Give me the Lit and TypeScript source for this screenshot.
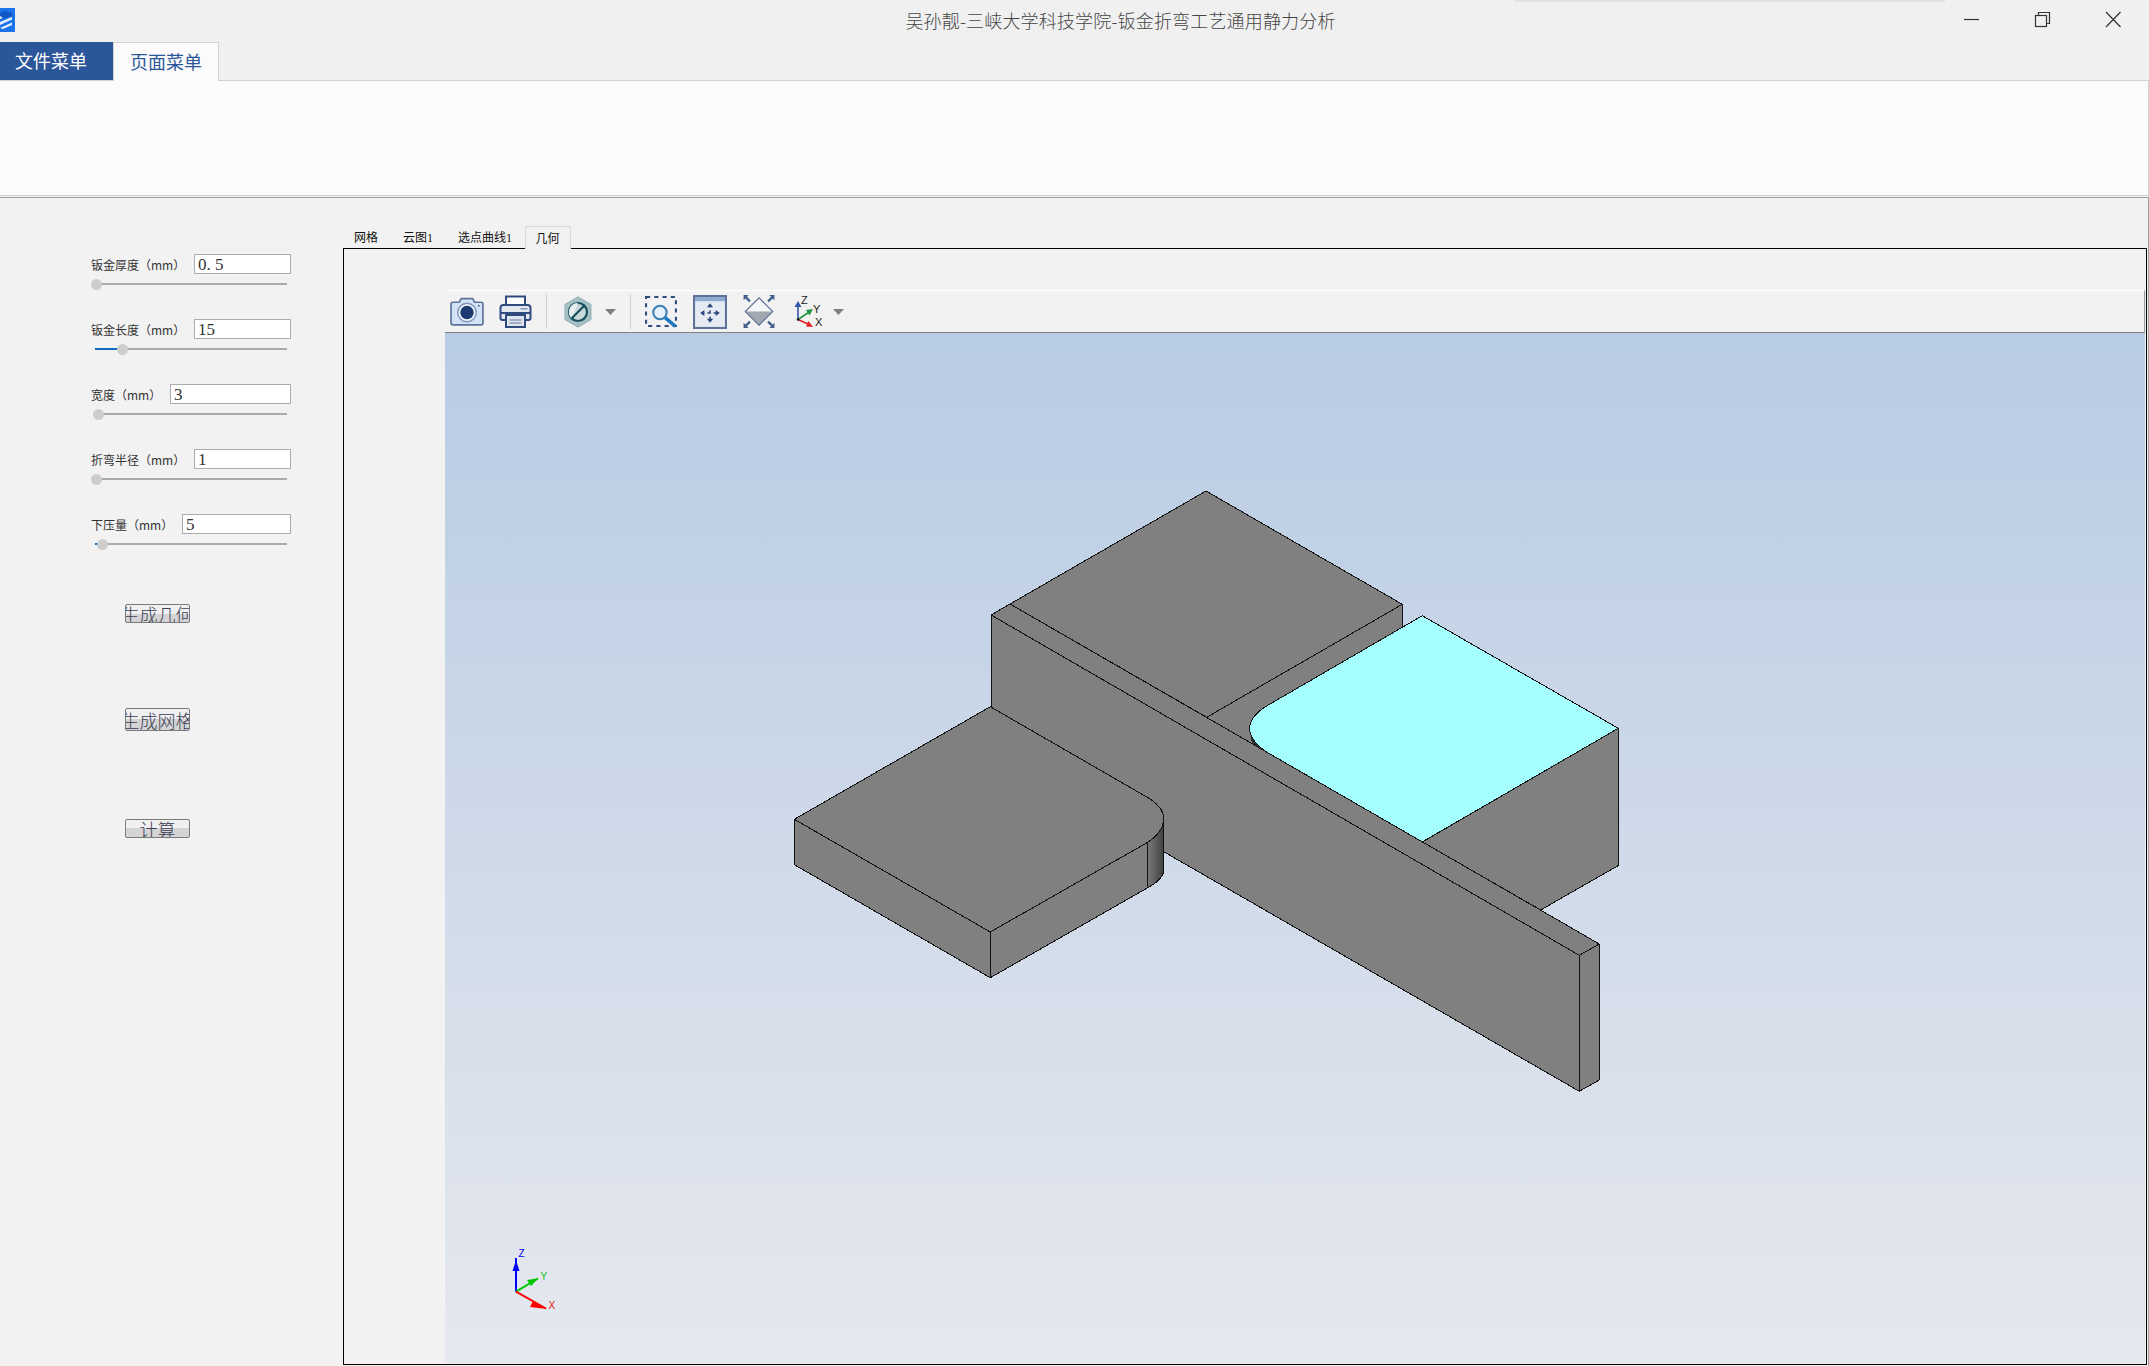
import { LitElement, html, css, svg } from 'lit';
import { customElement } from 'lit/decorators.js';

const FIELDS = [
  { label: '钣金厚度（mm）', value: '0. 5', thumb: 1, fill: 0, wide: false, mid: false },
  { label: '钣金长度（mm）', value: '15', thumb: 27, fill: 22, wide: false, mid: false },
  { label: '宽度（mm）', value: '3', thumb: 3, fill: 0, wide: true, mid: false },
  { label: '折弯半径（mm）', value: '1', thumb: 1, fill: 0, wide: false, mid: false },
  { label: '下压量（mm）', value: '5', thumb: 7, fill: 3, wide: false, mid: true },
];

const NAVY = '#2f4a7d';

@customElement('app-root')
export class AppRoot extends LitElement {
  static styles = css`
    :host {
      display: block;
      position: relative;
      width: 2149px;
      height: 1366px;
      overflow: hidden;
      background: #f0f0f0;
      font-family: 'Noto Sans CJK SC', 'Liberation Sans', sans-serif;
      color: #222;
    }

    /* title bar */
    .titlebar {
      display: flex;
      align-items: center;
      height: 42px;
    }
    .logo {
      width: 15px;
      height: 24px;
      flex: none;
      margin-bottom: 2px;
    }
    .title {
      flex: 1;
      padding: 0 0 2px 290px;
      text-align: center;
      font-size: 18px;
      font-weight: 300;
      letter-spacing: 0.17px;
      color: #444;
    }
    .controls {
      display: flex;
      flex: none;
    }
    .controls svg {
      width: 71px;
      height: 42px;
    }
    .shadow {
      position: absolute;
      left: 1515px;
      top: 0;
      width: 430px;
      height: 3px;
      background: linear-gradient(#dcdcdc, #f0f0f0);
    }

    /* ribbon */
    .ribbon-tabs {
      display: flex;
      height: 38px;
    }
    .rtab {
      box-sizing: border-box;
      height: 38px;
      font-size: 18px;
      line-height: 37px;
      text-align: center;
    }
    .rtab.file {
      width: 113px;
      padding-left: 15px;
      text-align: left;
      background: #2b579a;
      color: #fff;
    }
    .rtab.page {
      position: relative;
      z-index: 1;
      width: 106px;
      height: 39px;
      background: #fbfbfb;
      color: #2b579a;
      border: 1px solid #d2d2d2;
      border-bottom: none;
    }
    .ribbon-body {
      box-sizing: border-box;
      height: 116px;
      margin-bottom: 1px;
      background: #fbfbfb;
      border: 1px solid #d2d2d2;
      border-left: none;
    }

    /* main area */
    .main {
      box-sizing: border-box;
      display: grid;
      grid-template-columns: 343px 1fr;
      height: 1169px;
      background: #f2f2f2;
      border-top: 1px solid #a0a0a0;
      border-right: 1px solid #a0a0a0;
    }

    /* parameter panel */
    .panel {
      display: flex;
      flex-direction: column;
      padding: 56px 0 0 91px;
    }
    .field {
      width: 200px;
      height: 65px;
    }
    .row {
      display: flex;
      align-items: center;
      justify-content: space-between;
      height: 20px;
    }
    .row label {
      font-size: 12px;
      color: #333;
      white-space: nowrap;
    }
    .row input {
      box-sizing: border-box;
      width: 97px;
      height: 20px;
      padding: 1px 0 0 3px;
      border: 1px solid #ababab;
      border-radius: 0;
      outline: none;
      background: #fff;
      font-family: 'Liberation Serif', serif;
      font-size: 17px;
      color: #333;
      white-space: pre;
    }
    .row input.wide {
      width: 121px;
    }
    .row input.mid {
      width: 109px;
    }
    .slider {
      position: relative;
      width: 192px;
      height: 2px;
      margin: 9px 0 0 4px;
      background: #aaaaaa;
    }
    .fill {
      position: absolute;
      left: 0;
      top: 0;
      height: 2px;
      background: #0f6cbd;
    }
    .thumb {
      position: absolute;
      top: -4.5px;
      width: 11px;
      height: 11px;
      border-radius: 50%;
      background: #cdcdcd;
    }
    .btn {
      box-sizing: border-box;
      width: 65px;
      margin-left: 34px;
      padding: 0;
      overflow: hidden;
      display: flex;
      align-items: center;
      justify-content: center;
      border: 1px solid #7b7b7b;
      border-radius: 2px;
      background: linear-gradient(#f0f0f0 50%, #d4d4d4 50%);
      font-family: inherit;
      font-size: 18px;
      font-weight: 300;
      line-height: 1;
      color: #3c3f58;
      white-space: nowrap;
    }
    .btn.one {
      height: 19px;
      margin-top: 25px;
    }
    .btn.two {
      height: 23px;
      margin-top: 85px;
    }
    .btn.three {
      height: 19px;
      margin-top: 88px;
    }

    /* tab widget with the viewer */
    .work {
      display: flex;
      flex-direction: column;
      padding: 28px 1px 1px 0;
      min-height: 0;
    }
    .tabs {
      display: flex;
      height: 22px;
      flex: none;
      margin-left: -1.5px;
    }
    .tab {
      box-sizing: border-box;
      height: 22px;
      padding: 0 12.5px;
      font-family: 'Liberation Serif', 'Noto Sans CJK SC', serif;
      font-size: 12px;
      line-height: 25px;
      color: #111;
      white-space: nowrap;
    }
    .tab.active {
      position: relative;
      z-index: 1;
      height: 23px;
      padding: 0 10px;
      background: #f2f2f2;
      border: 1px solid #d9d9d9;
      border-bottom: none;
      line-height: 24px;
    }
    .frame {
      box-sizing: border-box;
      flex: 1;
      display: flex;
      flex-direction: column;
      min-height: 0;
      padding: 41px 1px 1px 101px;
      border: 1px solid #000;
    }
    .toolbar {
      box-sizing: border-box;
      display: flex;
      align-items: center;
      height: 43px;
      flex: none;
      background: #f2f2f2;
      border-top: 1px solid #fff;
      border-bottom: 1px solid #808080;
      border-right: 1px solid #9a9a9a;
    }
    .toolbar svg {
      flex: none;
    }
    .sep {
      width: 1px;
      height: 35px;
      margin-left: 14px;
      background: #cfcfcf;
    }
    .cam { margin-left: 5px; }
    .printer { margin-left: 15px; }
    .hex { margin-left: 17px; }
    .drop { margin-left: 13px; }
    .zoom { margin-left: 14px; }
    .pan { margin-left: 15px; }
    .fit { margin-left: 15px; }
    .axes { margin-left: 17px; }
    .drop2 { margin-left: 6px; }
    .scene {
      flex: 1;
      display: block;
      width: 100%;
      min-height: 0;
      background: linear-gradient(#b8cce4, #e6e8ee);
    }
  `;

  private renderPart() {
    // the sheet metal part, in page coordinates
    return svg`
      <defs>
        <linearGradient id="bend" x1="0" x2="1" y1="0" y2="0">
          <stop offset="0" stop-color="#7a7a7a" />
          <stop offset="1" stop-color="#404040" />
        </linearGradient>
      </defs>
      <g stroke="#111" stroke-width="1" stroke-linejoin="miter" shape-rendering="crispEdges">
        <polygon fill="#808080" stroke="none" points="1206.7,717.3 1402.3,604.3 1402.3,640 1268,720 1252,743" />
        <polygon fill="#808080" points="1010,604 1206,491 1402.3,604.3 1206.7,717.3" />
        <line x1="1402.3" y1="604.3" x2="1402.3" y2="627" />
        <polygon fill="#808080" points="1422.3,842 1618.3,728.3 1618.3,865.5 1540.7,910" />
        <polygon fill="#808080" points="991,615 1010,604 1599.3,944 1599.3,1080 1579.3,1091.3 1163.7,851.7 991,752" />
        <line x1="991" y1="615" x2="1579.3" y2="955.3" />
        <line x1="1579.3" y1="955.3" x2="1579.3" y2="1091.3" />
        <line x1="1579.3" y1="955.3" x2="1599.3" y2="944" />
        <path fill="#333" stroke="none" d="M1249.7 728.3 L1251.7 742.7 L1266.7 752 Z" />
        <path fill="#a6ffff" d="M1422.3 615.7 L1618.3 728.3 L1422.3 841.9 L1266.7 752.1 Q1249.7 741 1249.7 728.3 Q1249.7 716 1268.3 705 Z" />
        <polygon fill="#808080" points="794.3,819.3 990.3,932 990.3,977.7 794.3,864.7" />
        <polygon fill="#808080" points="990.3,932 1147.7,842.3 1147.7,887.7 990.3,977.7" />
        <path fill="url(#bend)" d="M1147.7 842.3 Q1163.7 832 1163.7 818.3 L1163.7 870 Q1163.7 879 1147.7 887.7 Z" />
        <path fill="#808080" d="M794.3 819.3 L990.3 706.7 L1143.3 795 Q1163.7 806 1163.7 818.3 Q1163.7 832 1147.7 842.3 L990.3 932 Z" />
      </g>
    `;
  }

  private renderTriad() {
    return svg`
      <g fill="none" stroke-width="2">
        <line x1="516" y1="1291.7" x2="516" y2="1258" stroke="#0000ff" />
        <line x1="516" y1="1291.7" x2="538" y2="1278.5" stroke="#00c800" />
        <line x1="516" y1="1291.7" x2="546" y2="1308.5" stroke="#ff0000" />
      </g>
      <polygon fill="#0000ff" points="516,1260 519.5,1271 512.5,1271" />
      <polygon fill="#00c800" points="538.3,1278.3 527,1280 531,1286" />
      <polygon fill="#ff0000" points="547,1309 533,1301 530,1307" />
      <g font-family="'Liberation Sans', sans-serif" font-size="10">
        <text x="518.5" y="1257" fill="#0000ff">Z</text>
        <text x="540.5" y="1280" fill="#20c020">Y</text>
        <text x="548.5" y="1309" fill="#e01010">X</text>
      </g>
    `;
  }

  render() {
    return html`
      <div class="titlebar">
        <svg class="logo" viewBox="0 0 15 24">
          <rect width="15" height="24" fill="#1a73e8" />
          <path d="M0 5 L4 3 L12 5 L12 8 L0 12 Z" fill="#0f57c4" />
          <path d="M0 8 L3 10 L0 11 Z M0 14 L12 9 L12 11.5 L0 17 Z M0 20 L12 14.5 L12 17 L3 21 Z" fill="#e8f1fd" />
        </svg>
        <div class="title">吴孙靓-三峡大学科技学院-钣金折弯工艺通用静力分析</div>
        <div class="controls">
          <svg viewBox="0 0 71 42">
            <line x1="28" y1="19.5" x2="43" y2="19.5" stroke="#333" stroke-width="1.2" />
          </svg>
          <svg viewBox="0 0 71 42">
            <g fill="none" stroke="#333" stroke-width="1.2">
              <rect x="28.5" y="15.5" width="11" height="11" />
              <path d="M31.5 15.5 V12.5 H42.5 V23.5 H39.5" />
            </g>
          </svg>
          <svg viewBox="0 0 71 42">
            <path d="M28 12 L42.5 27 M42.5 12 L28 27" fill="none" stroke="#333" stroke-width="1.2" />
          </svg>
        </div>
      </div>
      <div class="shadow"></div>

      <div class="ribbon-tabs">
        <div class="rtab file">文件菜单</div>
        <div class="rtab page">页面菜单</div>
      </div>
      <div class="ribbon-body"></div>

      <div class="main">
        <div class="panel">
          ${FIELDS.map(
            (f) => html`
              <div class="field">
                <div class="row">
                  <label>${f.label}</label>
                  <input class="${f.wide ? 'wide' : f.mid ? 'mid' : ''}" .value=${f.value} />
                </div>
                <div class="slider">
                  <div class="fill" style="width:${f.fill}px"></div>
                  <div class="thumb" style="left:${f.thumb - 5.5}px"></div>
                </div>
              </div>
            `
          )}
          <button class="btn one">生成几何</button>
          <button class="btn two">生成网格</button>
          <button class="btn three">计算</button>
        </div>

        <div class="work">
          <div class="tabs">
            <div class="tab">网格</div>
            <div class="tab">云图1</div>
            <div class="tab">选点曲线1</div>
            <div class="tab active">几何</div>
          </div>
          <div class="frame">
            <div class="toolbar">
              <svg class="cam" width="34" height="29" viewBox="0 0 33 28">
                <path d="M1 7 Q1 5 3 5 H9 L11 1.5 H22 L24 5 H30 Q32 5 32 7 V25 Q32 27 30 27 H3 Q1 27 1 25 Z" fill="#d3e2f6" stroke="#5d7298" stroke-width="1.6" />
                <circle cx="16.5" cy="15" r="9" fill="#eef4fc" stroke="#7f95b8" stroke-width="1.4" />
                <circle cx="16.5" cy="15" r="6.5" fill="#1e3a72" />
                <circle cx="28" cy="8.5" r="1" fill="#5d7298" />
              </svg>
              <svg class="printer" width="33" height="33" viewBox="0 0 32 33">
                <rect x="6.5" y="1.5" width="19" height="10" fill="#fff" stroke="${NAVY}" stroke-width="2" />
                <path d="M6 25 H3 Q1 25 1 23 V13 Q1 10 4 10 H28 Q31 10 31 13 V23 Q31 25 29 25 H26" fill="#e4e9f1" stroke="${NAVY}" stroke-width="2" />
                <rect x="1.5" y="17" width="29" height="2" fill="${NAVY}" />
                <rect x="21" y="13" width="7" height="1.6" fill="#8a9ab5" />
                <rect x="6.5" y="20" width="19" height="12" fill="#dfe5ee" stroke="${NAVY}" stroke-width="2" />
                <path d="M10 25 H22 M10 28 H22" stroke="#8a9ab5" stroke-width="1.4" />
              </svg>
              <div class="sep"></div>
              <svg class="hex" width="28" height="32" viewBox="0 0 28 32">
                <polygon points="14,0.8 27,8.4 27,23.6 14,31.2 1,23.6 1,8.4" fill="#a7c0c6" stroke="#93aeb5" />
                <circle cx="14" cy="16" r="9" fill="#c9d8da" stroke="#17505f" stroke-width="2.2" />
                <path d="M14 7 A9 9 0 0 0 7.6 22.4 Z" fill="#e7eeef" />
                <line x1="7.8" y1="22.2" x2="20.2" y2="9.8" stroke="#17505f" stroke-width="2.2" />
              </svg>
              <svg class="drop" width="11" height="6" viewBox="0 0 11 6">
                <polygon points="0,0 11,0 5.5,6" fill="#808080" />
              </svg>
              <div class="sep"></div>
              <svg class="zoom" width="33" height="32" viewBox="0 0 32 31">
                <rect x="1" y="1" width="29" height="28" fill="none" stroke="${NAVY}" stroke-width="2" stroke-dasharray="4 4" />
                <circle cx="14.5" cy="16" r="6.5" fill="#e6f0fa" stroke="#3a7fb5" stroke-width="2" />
                <line x1="19.5" y1="21" x2="29.5" y2="29.5" stroke="#1c78c0" stroke-width="3.4" />
              </svg>
              <svg class="pan" width="34" height="34" viewBox="0 0 33 33">
                <rect x="1" y="1" width="31" height="31" fill="#e6eaf2" stroke="#5d7298" stroke-width="2" />
                <rect x="2" y="2" width="29" height="4" fill="#8ea9d2" />
                <path d="M16.5 9 V26 M8 17.5 H25" stroke="${NAVY}" stroke-width="1.6" stroke-dasharray="3 3" fill="none" />
                <path d="M16.5 8 L13.5 12 H19.5 Z M16.5 27 L13.5 23 H19.5 Z M7 17.5 L11 14.5 V20.5 Z M26 17.5 L22 14.5 V20.5 Z" fill="${NAVY}" />
              </svg>
              <svg class="fit" width="34" height="35" viewBox="0 0 32 34">
                <polygon points="16,4 29,17 16,30 3,17" fill="#e9edf3" stroke="#5d7298" stroke-width="1.6" />
                <polygon points="16,4.5 28.5,17 3.5,17" fill="#f5f6f8" />
                <polygon points="16,17 28.5,17 16,29.5 3.5,17" fill="#a3a8b0" />
                <path d="M1 1 H6 L4.3 2.7 L8 6.4 L6.4 8 L2.7 4.3 L1 6 Z M31 1 H26 L27.7 2.7 L24 6.4 L25.6 8 L29.3 4.3 L31 6 Z M1 33 H6 L4.3 31.3 L8 27.6 L6.4 26 L2.7 29.7 L1 28 Z M31 33 H26 L27.7 31.3 L24 27.6 L25.6 26 L29.3 29.7 L31 28 Z" fill="#43608f" />
              </svg>
              <svg class="axes" width="34" height="33" viewBox="0 0 34 33">
                <line x1="5" y1="24.5" x2="5" y2="9" stroke="#2d56a8" stroke-width="1.6" />
                <polygon points="5,6 1.5,12 8.5,12" fill="#2d56a8" />
                <line x1="5" y1="24.5" x2="17" y2="16.5" stroke="#1e9440" stroke-width="1.6" />
                <polygon points="20,14 13,15 16.5,20.5" fill="#1e9440" />
                <line x1="5" y1="24.5" x2="16" y2="29.5" stroke="#e01f26" stroke-width="1.6" />
                <polygon points="20,32 13,31.5 15.5,26" fill="#e01f26" />
                <circle cx="5" cy="24.5" r="1.2" fill="#111" />
                <g font-family="'Liberation Sans', sans-serif" font-size="11" fill="#222">
                  <text x="8" y="9">Z</text>
                  <text x="20" y="18">Y</text>
                  <text x="22" y="31">X</text>
                </g>
              </svg>
              <svg class="drop2" width="11" height="6" viewBox="0 0 11 6">
                <polygon points="0,0 11,0 5.5,6" fill="#808080" />
              </svg>
            </div>
            <svg class="scene" viewBox="445 333 1700 1030" preserveAspectRatio="xMinYMin slice">
              ${this.renderPart()} ${this.renderTriad()}
            </svg>
          </div>
        </div>
      </div>
    `;
  }
}
